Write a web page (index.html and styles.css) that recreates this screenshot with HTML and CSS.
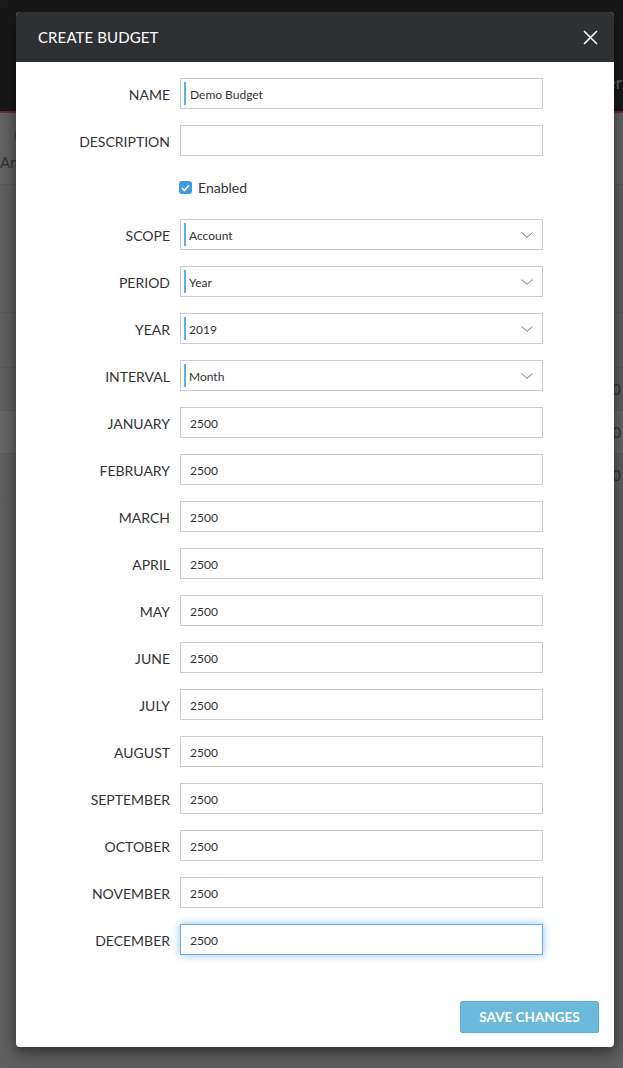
FILE: index.html
```html
<!DOCTYPE html>
<html lang="en">
<head>
<meta charset="utf-8">
<title>Create Budget</title>
<link rel="stylesheet" href="styles.css">
</head>
<body>
<div class="app">
  <div class="topbar"><span class="topbar-user">Partner</span></div>
  <div class="bg-row bg-head"><span class="bg-paren">(</span><span class="bg-text">An</span></div>
  <div class="bg-block"></div>
  <div class="bg-block short"></div>
  <div class="bg-row bg-num"><span>2500</span></div>
  <div class="bg-row bg-num alt"><span>2500</span></div>
  <div class="bg-row bg-num"><span>2500</span></div>
</div>

<div class="modal">
  <div class="modal-header">
    <h1 class="modal-title">CREATE BUDGET</h1>
    <button class="close" aria-label="Close">
      <svg width="15" height="15" viewBox="0 0 15 15"><path d="M1 1L14 14M14 1L1 14" stroke="#fff" stroke-width="1.6" fill="none"/></svg>
    </button>
  </div>
  <div class="modal-body">
    <form class="form">
      <div class="row"><label class="label">NAME</label><div class="field mark"><input class="control" value="Demo Budget"></div></div>
      <div class="row"><label class="label">DESCRIPTION</label><div class="field"><input class="control" value=""></div></div>
      <div class="row"><span></span><label class="check"><span class="box"><svg width="9" height="8" viewBox="0 0 9 8"><path d="M1 4.2L3.4 6.5L8 1.2" stroke="#fff" stroke-width="1.7" fill="none"/></svg></span>Enabled</label></div>
      <div class="row"><label class="label">SCOPE</label><div class="field mark"><select class="control"><option>Account</option></select><svg class="chev" width="12" height="6" viewBox="0 0 12 6"><path d="M0.5 0.5L6 5.3L11.5 0.5" stroke="#777" stroke-width="1" fill="none"/></svg></div></div>
      <div class="row"><label class="label">PERIOD</label><div class="field mark"><select class="control"><option>Year</option></select><svg class="chev" width="12" height="6" viewBox="0 0 12 6"><path d="M0.5 0.5L6 5.3L11.5 0.5" stroke="#777" stroke-width="1" fill="none"/></svg></div></div>
      <div class="row"><label class="label">YEAR</label><div class="field mark"><select class="control"><option>2019</option></select><svg class="chev" width="12" height="6" viewBox="0 0 12 6"><path d="M0.5 0.5L6 5.3L11.5 0.5" stroke="#777" stroke-width="1" fill="none"/></svg></div></div>
      <div class="row"><label class="label">INTERVAL</label><div class="field mark"><select class="control"><option>Month</option></select><svg class="chev" width="12" height="6" viewBox="0 0 12 6"><path d="M0.5 0.5L6 5.3L11.5 0.5" stroke="#777" stroke-width="1" fill="none"/></svg></div></div>
      <div class="row"><label class="label">JANUARY</label><div class="field"><input class="control" value="2500"></div></div>
      <div class="row"><label class="label">FEBRUARY</label><div class="field"><input class="control" value="2500"></div></div>
      <div class="row"><label class="label">MARCH</label><div class="field"><input class="control" value="2500"></div></div>
      <div class="row"><label class="label">APRIL</label><div class="field"><input class="control" value="2500"></div></div>
      <div class="row"><label class="label">MAY</label><div class="field"><input class="control" value="2500"></div></div>
      <div class="row"><label class="label">JUNE</label><div class="field"><input class="control" value="2500"></div></div>
      <div class="row"><label class="label">JULY</label><div class="field"><input class="control" value="2500"></div></div>
      <div class="row"><label class="label">AUGUST</label><div class="field"><input class="control" value="2500"></div></div>
      <div class="row"><label class="label">SEPTEMBER</label><div class="field"><input class="control" value="2500"></div></div>
      <div class="row"><label class="label">OCTOBER</label><div class="field"><input class="control" value="2500"></div></div>
      <div class="row"><label class="label">NOVEMBER</label><div class="field"><input class="control" value="2500"></div></div>
      <div class="row"><label class="label">DECEMBER</label><div class="field"><input class="control focused" value="2500"></div></div>
    </form>
    <div class="footer"><button class="save">SAVE CHANGES</button></div>
  </div>
</div>
</body>
</html>
```

FILE: styles.css
```css
* { box-sizing: border-box; }
html, body { margin: 0; padding: 0; }
body {
  width: 623px;
  height: 1068px;
  overflow: hidden;
  background: #5f5f5f;
  font-family: Lato, "Open Sans", sans-serif;
  position: relative;
}

/* background app (dimmed) */
.topbar {
  height: 113px;
  background: #181818;
  border-bottom: 2px solid #6a2c2c;
  display: flex;
  justify-content: flex-end;
  align-items: flex-end;
  padding: 0 1px 18px 0;
}
.topbar-user { color: #6c6c6c; font-size: 17px; }
.bg-row { display: flex; align-items: center; }
.bg-head {
  height: 72px;
  background: #626262;
  border-bottom: 1px solid #585858;
  position: relative;
}
.bg-paren { position: absolute; left: 14px; top: 14px; color: #3a3a3a; font-size: 12px; }
.bg-text { position: absolute; left: 0; top: 40px; color: #333; font-size: 15px; }
.bg-block { height: 128px; border-bottom: 1px solid #585858; background: #5f5f5f; }
.bg-block.short { height: 55px; }
.bg-num {
  height: 43px;
  justify-content: flex-end;
  color: #333;
  font-size: 15px;
  border-bottom: 1px solid #5c5c5c;
  padding-right: 2px;
}
.bg-num.alt { background: #656565; }

/* modal */
.modal {
  position: absolute;
  left: 16px;
  top: 12px;
  width: 598px;
  background: #fff;
  border-radius: 4px;
  overflow: hidden;
  box-shadow: 0 5px 15px rgba(0, 0, 0, 0.55);
}
.modal-header {
  height: 50px;
  background: #2f3033;
  display: flex;
  align-items: center;
  justify-content: space-between;
  padding: 0 16px 0 22px;
}
.modal-title {
  margin: 0;
  color: #fff;
  font-size: 15px;
  font-weight: 400;
  letter-spacing: 0.1px;
}
.close {
  background: none;
  border: 0;
  padding: 0;
  width: 15px;
  height: 15px;
  display: block;
  cursor: pointer;
}
.close svg { display: block; }

.modal-body { padding-top: 16px; }
.form { display: flex; flex-direction: column; gap: 16px; margin: 0; }
.row {
  display: grid;
  grid-template-columns: 154px 363px;
  column-gap: 10px;
  align-items: center;
  height: 31px;
}
.label {
  text-align: right;
  font-size: 14px;
  color: #333;
  padding-top: 2px;
}
.field { position: relative; height: 31px; }
.field.mark::before {
  content: "";
  position: absolute;
  left: 4px;
  top: 4px;
  bottom: 4px;
  width: 2px;
  background: #5cb3da;
  z-index: 1;
}
.control {
  display: block;
  width: 363px;
  height: 31px;
  margin: 0;
  border: 1px solid #cccccc;
  border-radius: 0;
  padding: 1px 9px 0;
  font-family: Lato, "Open Sans", sans-serif;
  font-size: 12px;
  color: #333;
  background: #fff;
  outline: none;
  -webkit-appearance: none;
  appearance: none;
}
select.control { padding-left: 8px; }
.chev { position: absolute; right: 10px; top: 13px; display: block; }
.control.focused {
  border-color: #66afe9;
  box-shadow: 0 0 8px rgba(102, 175, 233, 0.75);
}

.check {
  display: flex;
  align-items: center;
  gap: 6px;
  font-size: 14px;
  color: #333;
  margin-left: -1px;
}
.box {
  width: 13px;
  height: 13px;
  border-radius: 3px;
  background: #3d9ae3;
  display: flex;
  align-items: center;
  justify-content: center;
}
.box svg { display: block; }

.footer {
  display: flex;
  justify-content: flex-end;
  padding: 46px 15px 14px;
}
.save {
  width: 139px;
  height: 32px;
  background: #6bbadb;
  border: 1px solid #5eb1d6;
  border-radius: 2px;
  color: #fff;
  font-family: Lato, "Open Sans", sans-serif;
  font-weight: 700;
  font-size: 13.5px;
  padding: 0;
}
```
